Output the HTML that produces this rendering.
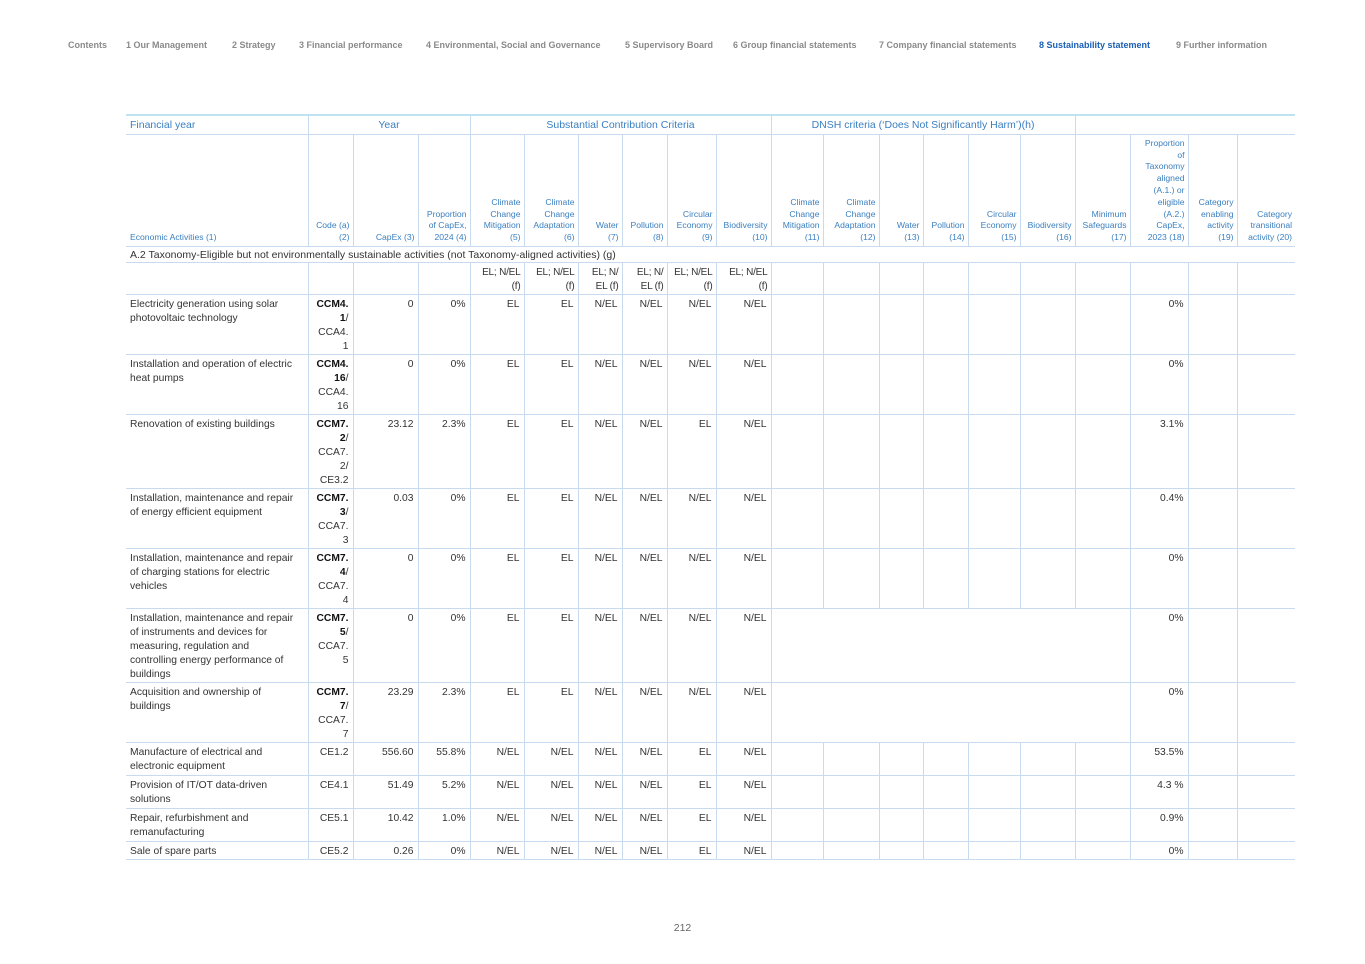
<!DOCTYPE html>
<html><head><meta charset="utf-8">
<style>
html,body{margin:0;padding:0;background:#fff;}
body{width:1365px;height:964px;position:relative;font-family:"Liberation Sans",sans-serif;color:#333;overflow:hidden;}
.nav span{position:absolute;top:40px;font-size:9px;font-weight:bold;color:#8a8a8a;white-space:nowrap;}
.nav span.act{color:#1a5fb4;}
table{position:absolute;left:126px;top:114px;border-collapse:collapse;table-layout:fixed;width:1169px;font-size:10.3px;}
td{padding:3px 4px 0 4px;vertical-align:top;text-align:right;line-height:14px;border-bottom:1px solid #c8dbee;border-left:1px solid #c8dbee;overflow:hidden;white-space:nowrap;}
td:first-child{border-left:none;text-align:left;white-space:normal;}
tr.h1 td{color:#3a7fc0;font-size:10.5px;text-align:center;vertical-align:middle;padding:0;height:18px;border-top:2px solid #bfe3f0;}
tr.h1 td:first-child{text-align:left;padding-left:4px;}
tr.h2 td{color:#3a7fc0;font-size:8.6px;line-height:11.8px;vertical-align:bottom;padding:0 3px 2px 2px;height:109px;}
tr.h2 td:first-child{padding-left:4px;}
tr.a2 td{border-left:none;height:14px;padding-top:1px;font-size:10.5px;}
tr.el td{padding-right:3px;font-size:10px;letter-spacing:-0.2px;}
.b{font-weight:bold;color:#111;}
.pg{position:absolute;top:922px;left:0;width:1365px;text-align:center;font-size:10.5px;color:#666;}
</style></head><body>
<div class="nav">
<span style="left:68px">Contents</span>
<span style="left:126px">1 Our Management</span>
<span style="left:232px">2 Strategy</span>
<span style="left:299px">3 Financial performance</span>
<span style="left:426px">4 Environmental, Social and Governance</span>
<span style="left:625px">5 Supervisory Board</span>
<span style="left:733px">6 Group financial statements</span>
<span style="left:879px">7 Company financial statements</span>
<span style="left:1039px" class="act">8 Sustainability statement</span>
<span style="left:1176px">9 Further information</span>
</div>
<table>
<colgroup>
<col style="width:182px"><col style="width:45px"><col style="width:65px"><col style="width:52px"><col style="width:54px"><col style="width:54px"><col style="width:44px"><col style="width:45px"><col style="width:49px"><col style="width:55px"><col style="width:52px"><col style="width:56px"><col style="width:44px"><col style="width:45px"><col style="width:52px"><col style="width:55px"><col style="width:55px"><col style="width:58px"><col style="width:49px"><col style="width:58px">
</colgroup>
<tr class="h1"><td>Financial year</td><td colspan="3">Year</td><td colspan="6">Substantial Contribution Criteria</td><td colspan="6">DNSH criteria (‘Does Not Significantly Harm’)(h)</td><td colspan="4"></td></tr>
<tr class="h2"><td style="text-align:left">Economic Activities (1)</td><td>Code (a)<br>(2)</td><td>CapEx (3)</td><td>Proportion<br>of CapEx,<br>2024 (4)</td><td>Climate<br>Change<br>Mitigation<br>(5)</td><td>Climate<br>Change<br>Adaptation<br>(6)</td><td>Water<br>(7)</td><td>Pollution<br>(8)</td><td>Circular<br>Economy<br>(9)</td><td>Biodiversity<br>(10)</td><td>Climate<br>Change<br>Mitigation<br>(11)</td><td>Climate<br>Change<br>Adaptation<br>(12)</td><td>Water<br>(13)</td><td>Pollution<br>(14)</td><td>Circular<br>Economy<br>(15)</td><td>Biodiversity<br>(16)</td><td>Minimum<br>Safeguards<br>(17)</td><td>Proportion<br>of<br>Taxonomy<br>aligned<br>(A.1.) or<br>eligible<br>(A.2.)<br>CapEx,<br>2023 (18)</td><td>Category<br>enabling<br>activity<br>(19)</td><td>Category<br>transitional<br>activity (20)</td></tr>
<tr class="a2"><td colspan="20">A.2 Taxonomy-Eligible but not environmentally sustainable activities (not Taxonomy-aligned activities) (g)</td></tr>
<tr class="el" style="height:32px"><td></td><td></td><td></td><td></td><td>EL; N/EL<br>(f)</td><td>EL; N/EL<br>(f)</td><td>EL; N/<br>EL (f)</td><td>EL; N/<br>EL (f)</td><td>EL; N/EL<br>(f)</td><td>EL; N/EL<br>(f)</td><td></td><td></td><td></td><td></td><td></td><td></td><td></td><td></td><td></td><td></td></tr>
<tr style="height:60px"><td>Electricity generation using solar photovoltaic technology</td><td><span class="b">CCM4.<br>1</span>/<br>CCA4.<br>1</td><td>0</td><td>0%</td><td>EL</td><td>EL</td><td>N/EL</td><td>N/EL</td><td>N/EL</td><td>N/EL</td><td></td><td></td><td></td><td></td><td></td><td></td><td></td><td>0%</td><td></td><td></td></tr>
<tr style="height:60px"><td>Installation and operation of electric heat pumps</td><td><span class="b">CCM4.<br>16</span>/<br>CCA4.<br>16</td><td>0</td><td>0%</td><td>EL</td><td>EL</td><td>N/EL</td><td>N/EL</td><td>N/EL</td><td>N/EL</td><td></td><td></td><td></td><td></td><td></td><td></td><td></td><td>0%</td><td></td><td></td></tr>
<tr style="height:73px"><td>Renovation of existing buildings</td><td><span class="b">CCM7.<br>2</span>/<br>CCA7.<br>2/<br>CE3.2</td><td>23.12</td><td>2.3%</td><td>EL</td><td>EL</td><td>N/EL</td><td>N/EL</td><td>EL</td><td>N/EL</td><td></td><td></td><td></td><td></td><td></td><td></td><td></td><td>3.1%</td><td></td><td></td></tr>
<tr style="height:60px"><td>Installation, maintenance and repair of energy efficient equipment</td><td><span class="b">CCM7.<br>3</span>/<br>CCA7.<br>3</td><td>0.03</td><td>0%</td><td>EL</td><td>EL</td><td>N/EL</td><td>N/EL</td><td>N/EL</td><td>N/EL</td><td></td><td></td><td></td><td></td><td></td><td></td><td></td><td>0.4%</td><td></td><td></td></tr>
<tr style="height:60px"><td>Installation, maintenance and repair of charging stations for electric vehicles</td><td><span class="b">CCM7.<br>4</span>/<br>CCA7.<br>4</td><td>0</td><td>0%</td><td>EL</td><td>EL</td><td>N/EL</td><td>N/EL</td><td>N/EL</td><td>N/EL</td><td></td><td></td><td></td><td></td><td></td><td></td><td></td><td>0%</td><td></td><td></td></tr>
<tr style="height:73px"><td style="white-space:nowrap">Installation, maintenance and repair<br>of instruments and devices for<br>measuring, regulation and<br>controlling energy performance of<br>buildings</td><td><span class="b">CCM7.<br>5</span>/<br>CCA7.<br>5</td><td>0</td><td>0%</td><td>EL</td><td>EL</td><td>N/EL</td><td>N/EL</td><td>N/EL</td><td>N/EL</td><td colspan="7"></td><td>0%</td><td></td><td></td></tr>
<tr style="height:59px"><td>Acquisition and ownership of buildings</td><td><span class="b">CCM7.<br>7</span>/<br>CCA7.<br>7</td><td>23.29</td><td>2.3%</td><td>EL</td><td>EL</td><td>N/EL</td><td>N/EL</td><td>N/EL</td><td>N/EL</td><td colspan="7"></td><td>0%</td><td></td><td></td></tr>
<tr style="height:33px"><td>Manufacture of electrical and electronic equipment</td><td>CE1.2</td><td>556.60</td><td>55.8%</td><td>N/EL</td><td>N/EL</td><td>N/EL</td><td>N/EL</td><td>EL</td><td>N/EL</td><td></td><td></td><td></td><td></td><td></td><td></td><td></td><td>53.5%</td><td></td><td></td></tr>
<tr style="height:33px"><td>Provision of IT/OT data-driven solutions</td><td>CE4.1</td><td>51.49</td><td>5.2%</td><td>N/EL</td><td>N/EL</td><td>N/EL</td><td>N/EL</td><td>EL</td><td>N/EL</td><td></td><td></td><td></td><td></td><td></td><td></td><td></td><td>4.3 %</td><td></td><td></td></tr>
<tr style="height:33px"><td>Repair, refurbishment and remanufacturing</td><td>CE5.1</td><td>10.42</td><td>1.0%</td><td>N/EL</td><td>N/EL</td><td>N/EL</td><td>N/EL</td><td>EL</td><td>N/EL</td><td></td><td></td><td></td><td></td><td></td><td></td><td></td><td>0.9%</td><td></td><td></td></tr>
<tr style="height:17px"><td>Sale of spare parts</td><td>CE5.2</td><td>0.26</td><td>0%</td><td>N/EL</td><td>N/EL</td><td>N/EL</td><td>N/EL</td><td>EL</td><td>N/EL</td><td></td><td></td><td></td><td></td><td></td><td></td><td></td><td>0%</td><td></td><td></td></tr>
</table>
<div class="pg">212</div>
</body></html>
